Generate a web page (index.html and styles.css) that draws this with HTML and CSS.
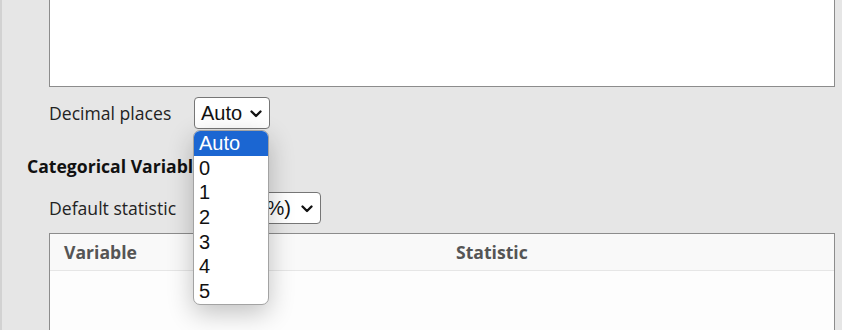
FILE: index.html
```html
<!DOCTYPE html>
<html lang="en">
<head>
  <meta charset="UTF-8">
  <meta name="viewport" content="width=device-width, initial-scale=1.0">
  <title>summary options</title>
  <link rel="stylesheet" href="styles.css">
</head>

<body>
  <div class="panel">
    <div class="indent">
      <div class="notes-box"></div>

      <!-- decimal places, list is open -->
      <div class="field-row">
        <span class="field-label">Decimal places</span>
        <div class="select-wrap">
          <div class="select-box select-small">
            <span>Auto</span>
            <svg class="chev" width="12" height="8" viewBox="0 0 12 8"><path d="M1.5 1.5 L6 6 L10.5 1.5" fill="none" stroke="#111" stroke-width="2.3" stroke-linecap="round" stroke-linejoin="round"/></svg>
          </div>
          <ul class="drop-list">
            <li class="picked">Auto</li>
            <li>0</li>
            <li>1</li>
            <li>2</li>
            <li>3</li>
            <li>4</li>
            <li>5</li>
          </ul>
        </div>
      </div>
    </div>

    <h3 class="section-title">Categorical Variables</h3>

    <div class="indent">
      <div class="field-row row-stat">
        <span class="field-label">Default statistic</span>
        <div class="select-box select-wide">
          <span>Count (%)</span>
          <svg class="chev" width="12" height="8" viewBox="0 0 12 8"><path d="M1.5 1.5 L6 6 L10.5 1.5" fill="none" stroke="#111" stroke-width="2.3" stroke-linecap="round" stroke-linejoin="round"/></svg>
        </div>
      </div>

      <div class="var-table">
        <div class="var-head">
          <span>Variable</span>
          <span>Statistic</span>
        </div>
        <div class="var-body"></div>
      </div>
    </div>
  </div>
</body>
</html>
```

FILE: styles.css
```css
body{
  margin: 0;
  background: #e6e6e6;
  font-family: "Open Sans", "Noto Sans", sans-serif;
  font-size: 17.6px;
  color: #222;
}
.panel{
  border-left: 2px solid #d2d2d2;
  padding: 0 7px 0 25px;
  height: 330px;
  overflow: hidden;
}
.indent{
  padding-left: 22px;
}
.notes-box{
  height: 86px;
  background: #fff;
  border: 1px solid #8c8c8c;
  border-top: none;
}
.field-row{
  display: flex;
  align-items: center;
  margin-top: 10px;
  height: 32px;
}
.field-label{
  width: 145px;
  flex-shrink: 0;
  line-height: 24px;
}
.select-wrap{
  position: relative;
}
.select-box{
  box-sizing: border-box;
  height: 32px;
  background: #fff;
  border: 1px solid #767676;
  border-radius: 4px;
  display: flex;
  align-items: center;
  justify-content: space-between;
  padding: 0 7px 0 6px;
  font-family: "Liberation Sans", Arial, sans-serif;
  font-size: 20px;
  color: #111;
}
.select-small{
  width: 76px;
}
.select-wide{
  width: 127px;
}
.chev{
  display: block;
  margin-top: 1px;
}
.drop-list{
  position: absolute;
  top: calc(100% + 1px);
  left: -1px;
  width: 76px;
  box-sizing: border-box;
  margin: 0;
  padding: 0;
  list-style: none;
  background: #fff;
  border: 1px solid #a3a3a3;
  border-radius: 7px;
  overflow: hidden;
  box-shadow: 0 8px 26px rgba(0, 0, 0, 0.24);
  font-family: "Liberation Sans", Arial, sans-serif;
  font-size: 20px;
  color: #111;
  z-index: 5;
}
.drop-list li{
  height: 24.7px;
  line-height: 24.7px;
  padding-left: 5px;
}
.drop-list .picked{
  background: #1b66d2;
  color: #fff;
}
.section-title{
  margin: 25px 0 0;
  font-size: 17.6px;
  font-weight: 700;
  line-height: 24px;
  color: #111;
}
.row-stat{
  margin-top: 14px;
}
.var-table{
  margin-top: 9px;
  height: 140px;
  background: #fdfdfd;
  border: 1px solid #8c8c8c;
}
.var-head{
  display: grid;
  grid-template-columns: 1fr 1fr;
  height: 36px;
  align-items: center;
  background: #f9f9f9;
  border-bottom: 1px solid #e6e6e6;
  font-weight: 700;
  color: #555;
}
.var-head span{
  padding-left: 14px;
}
```
